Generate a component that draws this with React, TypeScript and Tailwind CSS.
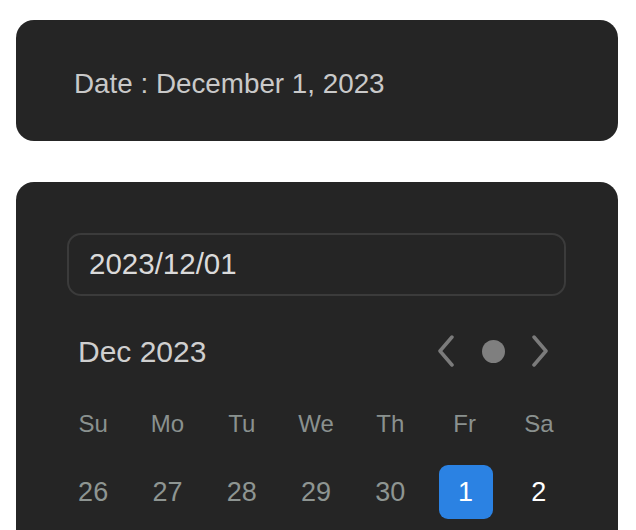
import React from 'react';

const WEEK = ['Su', 'Mo', 'Tu', 'We', 'Th', 'Fr', 'Sa'];

type Day = { n: number; muted: boolean; selected?: boolean };

const DAYS: Day[] = [
  { n: 26, muted: true },
  { n: 27, muted: true },
  { n: 28, muted: true },
  { n: 29, muted: true },
  { n: 30, muted: true },
  { n: 1, muted: false, selected: true },
  { n: 2, muted: false },
];

export default function App() {
  return (
    <div
      className="w-[636px] h-[530px] overflow-hidden bg-white pt-5 pl-4"
      style={{ fontFamily: '"Liberation Sans", Arial, sans-serif' }}
    >
      <div className="w-[602px] h-[121px] rounded-[18px] bg-[#252525] flex items-center pl-[58px] pt-[7px]">
        <span className="text-[27.8px] text-[#c9c9c9]">Date : December 1, 2023</span>
      </div>

      <div className="w-[602px] mt-[41px] h-[400px] rounded-[18px] bg-[#252525] pt-[51px]">
        <div className="ml-[51px] w-[499px] h-[63px] rounded-[14px] border-2 border-[#3b3b3b] flex items-center pl-[20px]">
          <span className="text-[29.5px] text-[#dadada]">2023/12/01</span>
        </div>

        <div className="mt-[22px] ml-[62px] w-[472px] flex items-center justify-between h-[66px]">
          <span className="text-[30px] text-[#cfcfcf]">Dec 2023</span>
          <div className="flex items-center">
            <svg width="20" height="32" viewBox="0 0 20 32" fill="none">
              <path d="M16 2 L4 16 L16 30" stroke="#7b7b7b" strokeWidth="3.5" strokeLinecap="round" strokeLinejoin="round" />
            </svg>
            <div className="ml-[26px] w-[23px] h-[23px] rounded-full bg-[#7f7f7f]" />
            <svg className="ml-[25px]" width="20" height="32" viewBox="0 0 20 32" fill="none">
              <path d="M4 2 L16 16 L4 30" stroke="#7b7b7b" strokeWidth="3.5" strokeLinecap="round" strokeLinejoin="round" />
            </svg>
          </div>
        </div>

        <div className="ml-[40px] w-[520px] grid grid-cols-7 mt-[22px]">
          {WEEK.map((w) => (
            <div key={w} className="h-[36px] flex items-center justify-center text-[24px] text-[#8a918f]">
              {w}
            </div>
          ))}
        </div>

        <div className="ml-[40px] w-[520px] grid grid-cols-7 mt-[23px]">
          {DAYS.map((d) => (
            <div key={d.n} className="h-[54px] flex items-center justify-center">
              {d.selected ? (
                <div className="ml-[2px] w-[54px] h-[54px] rounded-[9px] bg-[#2b82e3] flex items-center justify-center text-[27px] text-white">
                  {d.n}
                </div>
              ) : (
                <span className={d.muted ? 'text-[27px] text-[#8e9592]' : 'text-[27px] text-white'}>{d.n}</span>
              )}
            </div>
          ))}
        </div>
      </div>
    </div>
  );
}
